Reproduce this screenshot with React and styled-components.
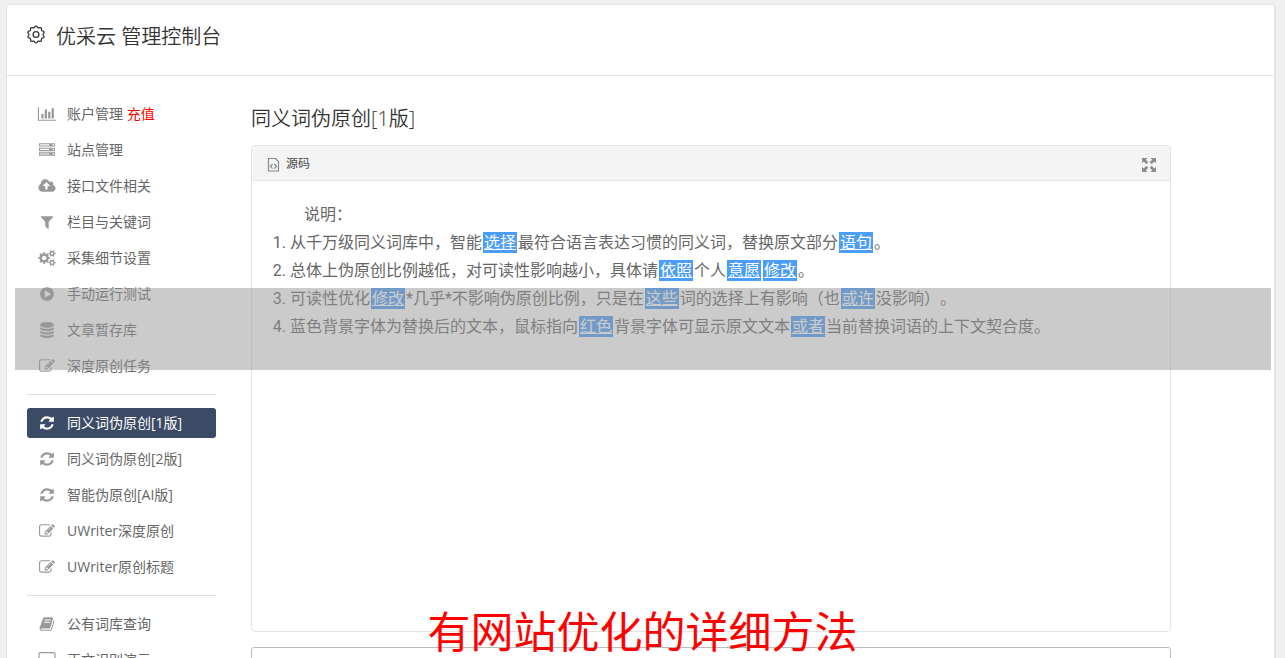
import React, { Component } from "react";
import styled, { createGlobalStyle } from "styled-components";

const GlobalStyle = createGlobalStyle`
  * {
    box-sizing: border-box;
  }
  body {
    margin: 0;
    height: 100vh;
    overflow: hidden;
    background-color: #f0f0f0;
    font-family: "Open Sans", "Noto Sans CJK SC", sans-serif;
    font-size: 14px;
    font-weight: 400;
    color: #666;
  }
`;

const Card = styled.div`
  margin: 4px 9px 0 6px;
  background-color: #fff;
  border: 1px solid #e4e4e4;
  border-right-width: 2px;
  border-radius: 4px;
`;

const Header = styled.header`
  height: 71px;
  display: flex;
  align-items: flex-start;
  gap: 10px;
  padding: 16px 19px;
  border-bottom: 1px solid #e4e4e4;
  color: #333;
`;

const Brand = styled.h1`
  margin: 0;
  font-size: 20px;
  line-height: 32px;
  font-weight: 350;
`;

const GearIcon = styled.svg`
  width: 20px;
  height: 28px;
`;

const Body = styled.div`
  display: flex;
  align-items: flex-start;
  gap: 35px;
  padding: 23px 20px;
`;

const Sidebar = styled.nav`
  flex: 0 0 189px;
`;

const Menu = styled.ul`
  list-style: none;
  display: flex;
  flex-direction: column;
  gap: 6px;
  margin: 0;
  padding: 0 0 13px;

  & + & {
    border-top: 1px solid #ddd;
    padding-top: 13px;
  }
`;

const MenuLink = styled.a`
  height: 30px;
  display: flex;
  align-items: center;
  gap: 10px;
  padding-left: 10px;
  border-radius: 3px;
  line-height: 30px;
  white-space: nowrap;
  text-decoration: none;
  color: ${(props) => (props.$active ? "#fff" : "#666")};
  background-color: ${(props) => (props.$active ? "#3b4b66" : "transparent")};

  svg {
    width: 20px;
    height: 16px;
    fill: ${(props) => (props.$active ? "#fff" : "#999")};
  }
`;

const Recharge = styled.span`
  color: #f00;
`;

const Main = styled.main`
  flex: 1;
  max-width: 920px;
`;

const Title = styled.h2`
  margin: 5px 0 11px;
  font-size: 20px;
  line-height: 30px;
  font-weight: 350;
  color: #333;
`;

const Editor = styled.section`
  height: 487px;
  border: 1px solid #e4e4e4;
  border-radius: 4px;
  overflow: hidden;
`;

const Toolbar = styled.div`
  height: 35px;
  display: flex;
  align-items: center;
  justify-content: space-between;
  padding: 1px 13px 0;
  border-bottom: 1px solid #e4e4e4;
  background-color: #f4f4f4;
`;

const ToolButton = styled.button`
  display: flex;
  align-items: center;
  gap: 5px;
  padding: 0;
  border: none;
  background-color: transparent;
  font-family: inherit;
  font-size: 12px;
  line-height: 18px;
  color: #484848;

  svg {
    width: 16px;
    height: 16px;
    margin-top: 3px;
  }
`;

const Content = styled.div`
  padding: 20px;
  font-family: Roboto, "Noto Sans CJK SC", sans-serif;
  font-size: 16px;
  line-height: 28px;
  text-spacing-trim: space-all;
`;

const Intro = styled.p`
  margin: 0;
  text-indent: 2em;
`;

const Rules = styled.ol`
  margin: 0;
  padding-left: 18px;
`;

const Replaced = styled.span`
  display: inline-block;
  height: 21px;
  margin: 0 1px;
  padding: 0 1px;
  line-height: 21px;
  background-color: #4a9df8;
  color: #fff;
  text-decoration: underline;
`;

const SourceText = styled.textarea`
  display: block;
  width: 100%;
  height: 120px;
  margin-top: 15px;
  border: 1px solid #bbb;
  border-radius: 3px;
  resize: none;
`;

const Shade = styled.div`
  position: absolute;
  top: 288px;
  left: 15px;
  right: 14px;
  height: 82px;
  background-color: rgba(151, 151, 151, 0.5);
`;

const Caption = styled.div`
  position: absolute;
  top: 606px;
  left: 0;
  right: 0;
  font-size: 43px;
  line-height: 52px;
  text-align: center;
  color: #f00;
`;

const icons = {
  chart: {
    box: "0 0 2048 1792",
    d: "M640 896v512h-256v-512h256zm384-512v1024h-256v-1024h256zm1024 1152v128h-2048v-1536h128v1408h1920zm-640-896v768h-256v-768h256zm384-384v1152h-256v-1152h256z"
  },
  server: {
    box: "0 0 1792 1792",
    d: "M128 1408h1024v-128h-1024v128zm0-512h1024v-128h-1024v128zm1568 448q0-40-28-68t-68-28-68 28-28 68 28 68 68 28 68-28 28-68zm-1568-960h1024v-128h-1024v128zm1568 448q0-40-28-68t-68-28-68 28-28 68 28 68 68 28 68-28 28-68zm0-512q0-40-28-68t-68-28-68 28-28 68 28 68 68 28 68-28 28-68zm96 832v384h-1792v-384h1792zm0-512v384h-1792v-384h1792zm0-512v384h-1792v-384h1792z"
  },
  upload: {
    box: "-64 0 1920 1792",
    d: "M1216 864q0-14-9-23l-352-352q-9-9-23-9t-23 9l-351 351q-10 12-10 24 0 14 9 23t23 9h224v352q0 13 9.5 22.5t22.5 9.5h192q13 0 22.5-9.5t9.5-22.5v-352h224q13 0 22.5-9.5t9.5-22.5zm640 288q0 159-112.5 271.5t-271.5 112.5h-1088q-185 0-316.5-131.5t-131.5-316.5q0-130 70-240t188-165q-2-30-2-43 0-212 150-362t362-150q156 0 285.5 87t188.5 231q71-62 166-62 106 0 181 75t75 181q0 76-41 138 130 31 213.5 135.5t83.5 238.5z"
  },
  filter: {
    box: "0 0 1792 1792",
    d: "M1595 295q17 41-14 70l-493 493v742q0 42-39 59-13 5-25 5-27 0-45-19l-256-256q-19-19-19-45v-486l-493-493q-31-29-14-70 17-39 59-39h1280q42 0 59 39z"
  },
  cogs: {
    box: "0 0 1920 1792",
    d: "M896 896q0-106-75-181t-181-75-181 75-75 181 75 181 181 75 181-75 75-181zm768 512q0-52-38-90t-90-38-90 38-38 90q0 53 37.5 90.5t90.5 37.5 90.5-37.5 37.5-90.5zm0-1024q0-52-38-90t-90-38-90 38-38 90q0 53 37.5 90.5t90.5 37.5 90.5-37.5 37.5-90.5zm-384 421v185q0 10-7 19.5t-16 10.5l-155 24q-11 35-32 76 34 48 90 115 7 11 7 20 0 12-7 19-23 30-82.5 89.5t-78.5 59.5q-11 0-21-7l-115-90q-37 19-77 31-11 108-23 155-7 24-30 24h-186q-11 0-20-7.5t-10-17.5l-23-153q-34-10-75-31l-118 89q-7 7-20 7-11 0-21-8-144-133-144-160 0-9 7-19 10-14 41-53t47-61q-23-44-35-82l-152-24q-10-1-17-9.5t-7-19.5v-185q0-10 7-19.5t16-10.5l155-24q11-35 32-76-34-48-90-115-7-11-7-20 0-12 7-20 22-30 82-89t79-59q11 0 21 7l115 90q34-18 77-32 11-108 23-154 7-24 30-24h186q11 0 20 7.5t10 17.5l23 153q34 10 75 31l118-89q8-7 20-7 11 0 21 8 144 133 144 160 0 8-7 19-12 16-42 54t-45 60q23 48 34 82l152 23q10 2 17 10.5t7 19.5zm640 533v140q0 16-149 31-12 27-30 52 51 113 51 138 0 4-4 7-122 71-124 71-8 0-46-47t-52-68q-20 2-30 2t-30-2q-14 21-52 68t-46 47q-2 0-124-71-4-3-4-7 0-25 51-138-18-25-30-52-149-15-149-31v-140q0-16 149-31 13-29 30-52-51-113-51-138 0-4 4-7 4-2 35-20t59-34 30-16q8 0 46 46.5t52 67.5q20-2 30-2t30 2q51-71 92-112l6-2q4 0 124 70 4 3 4 7 0 25-51 138 17 23 30 52 149 15 149 31zm0-1024v140q0 16-149 31-12 27-30 52 51 113 51 138 0 4-4 7-122 71-124 71-8 0-46-47t-52-68q-20 2-30 2t-30-2q-14 21-52 68t-46 47q-2 0-124-71-4-3-4-7 0-25 51-138-18-25-30-52-149-15-149-31v-140q0-16 149-31 13-29 30-52-51-113-51-138 0-4 4-7 4-2 35-20t59-34 30-16q8 0 46 46.5t52 67.5q20-2 30-2t30 2q51-71 92-112l6-2q4 0 124 70 4 3 4 7 0 25-51 138 17 23 30 52 149 15 149 31z"
  },
  play: {
    box: "0 0 1792 1792",
    d: "M896 128q209 0 385.5 103t279.5 279.5 103 385.5-103 385.5-279.5 279.5-385.5 103-385.5-103-279.5-279.5-103-385.5 103-385.5 279.5-279.5 385.5-103zm384 823q32-18 32-55t-32-55l-544-320q-31-19-64-1-32 19-32 56v640q0 37 32 56 16 8 32 8 17 0 32-9z"
  },
  database: {
    box: "0 0 1792 1792",
    d: "M896 768q237 0 443-43t325-127v170q0 69-103 128t-280 93.5-385 34.5-385-34.5-280-93.5-103-128v-170q119 84 325 127t443 43zm0 768q237 0 443-43t325-127v170q0 69-103 128t-280 93.5-385 34.5-385-34.5-280-93.5-103-128v-170q119 84 325 127t443 43zm0-384q237 0 443-43t325-127v170q0 69-103 128t-280 93.5-385 34.5-385-34.5-280-93.5-103-128v-170q119 84 325 127t443 43zm0-1152q208 0 385 34.5t280 93.5 103 128v128q0 69-103 128t-280 93.5-385 34.5-385-34.5-280-93.5-103-128v-128q0-69 103-128t280-93.5 385-34.5z"
  },
  edit: {
    box: "0 0 1792 1792",
    d: "M888 1184l116-116-152-152-116 116v56h96v96h56zm440-720q-16-16-33 1l-350 350q-17 17-1 33t33-1l350-350q17-17 1-33zm80 594v190q0 119-84.5 203.5t-203.5 84.5h-832q-119 0-203.5-84.5t-84.5-203.5v-832q0-119 84.5-203.5t203.5-84.5h832q63 0 117 25 15 7 18 23 3 17-9 29l-49 49q-14 14-32 8-23-6-45-6h-832q-66 0-113 47t-47 113v832q0 66 47 113t113 47h832q66 0 113-47t47-113v-126q0-13 9-22l64-64q15-15 35-7t20 29zm-96-738l288 288-672 672h-288v-288zm444 132l-92 92-288-288 92-92q28-28 68-28t68 28l152 152q28 28 28 68t-28 68z"
  },
  refresh: {
    box: "0 0 1792 1792",
    d: "M1639 1056q0 5-1 7-64 268-268 434.5t-478 166.5q-146 0-282.5-55t-243.5-157l-129 129q-19 19-45 19t-45-19-19-45v-448q0-26 19-45t45-19h448q26 0 45 19t19 45-19 45l-137 137q71 66 161 102t187 36q134 0 250-65t186-179q11-17 53-117 8-23 30-23h192q13 0 22.5 9.5t9.5 22.5zm25-800v448q0 26-19 45t-45 19h-448q-26 0-45-19t-19-45 19-45l138-138q-148-137-349-137-134 0-250 65t-186 179q-11 17-53 117-8 23-30 23h-199q-13 0-22.5-9.5t-9.5-22.5v-7q65-268 270-434.5t480-166.5q146 0 284 55.5t245 156.5l130-129q19-19 45-19t45 19 19 45z"
  },
  book: {
    box: "0 0 1792 1792",
    d: "M1703 478q40 57 18 129l-275 906q-19 64-76.5 107.5t-122.5 43.5h-923q-77 0-148.5-53.5t-99.5-131.5q-24-67-2-127 0-4 3-27t4-37q1-8-3-21.5t-3-19.5q2-11 8-21t16.5-23.5 16.5-23.5q23-38 45-91.5t30-91.5q3-10 .5-30t-.5-28q3-11 17-28t17-23q21-36 42-92t25-90q1-9-2.5-32t.5-28q4-13 22-30.5t22-22.5q19-26 42.5-84.5t27.5-96.5q1-8-3-25.5t-2-26.5q2-8 9-18t18-23 17-21q8-12 16.5-30.5t15-35 16-36 19.5-32 26.5-23.5 36-11.5 47.5 5.5l-1 3q38-9 51-9h761q74 0 114 56t18 130l-274 906q-36 119-71.5 153.5t-128.5 34.5h-869q-27 0-38 15-11 16-1 43 24 70 144 70h923q29 0 56-15.5t35-41.5l300-987q7-22 5-57 38 15 59 43zm-1064 2q-4 13 2 22.5t20 9.5h608q13 0 25.5-9.5t16.5-22.5l21-64q4-13-2-22.5t-20-9.5h-608q-13 0-25.5 9.5t-16.5 22.5zm-83 256q-4 13 2 22.5t20 9.5h608q13 0 25.5-9.5t16.5-22.5l21-64q4-13-2-22.5t-20-9.5h-608q-13 0-25.5 9.5t-16.5 22.5z"
  },
  desktop: {
    box: "0 0 1920 1792",
    d: "M1792 992v-832q0-13-9.5-22.5t-22.5-9.5h-1600q-13 0-22.5 9.5t-9.5 22.5v832q0 13 9.5 22.5t22.5 9.5h1600q13 0 22.5-9.5t9.5-22.5zm128-832v1088q0 66-47 113t-113 47h-544q0 37 16 77.5t32 71 16 43.5q0 26-19 45t-45 19h-512q-26 0-45-19t-19-45q0-14 16-44t32-70 16-78h-544q-66 0-113-47t-47-113v-1088q0-66 47-113t113-47h1600q66 0 113 47t47 113z"
  }
};

// scalloped outline of the header gear, ten lobes
const gearPoints = Array.from({ length: 120 }, (_, i) => {
  const angle = (i / 120) * Math.PI * 2;
  const radius = 7.7 + 0.7 * Math.cos(angle * 10);
  const x = 10 + radius * Math.sin(angle);
  const y = 13.5 - radius * Math.cos(angle);
  return `${x.toFixed(2)},${y.toFixed(2)}`;
}).join(" ");

const Icon = ({ name }) => (
  <svg viewBox={icons[name].box} aria-hidden="true">
    <path d={icons[name].d} />
  </svg>
);

class App extends Component {
  state = {
    active: "同义词伪原创[1版]",
    source: "",
    menus: [
      [
        { icon: "chart", label: "账户管理", extra: "充值" },
        { icon: "server", label: "站点管理" },
        { icon: "upload", label: "接口文件相关" },
        { icon: "filter", label: "栏目与关键词" },
        { icon: "cogs", label: "采集细节设置" },
        { icon: "play", label: "手动运行测试" },
        { icon: "database", label: "文章暂存库" },
        { icon: "edit", label: "深度原创任务" }
      ],
      [
        { icon: "refresh", label: "同义词伪原创[1版]" },
        { icon: "refresh", label: "同义词伪原创[2版]" },
        { icon: "refresh", label: "智能伪原创[AI版]" },
        { icon: "edit", label: "UWriter深度原创" },
        { icon: "edit", label: "UWriter原创标题" }
      ],
      [
        { icon: "book", label: "公有词库查询" },
        { icon: "desktop", label: "正文识别演示" }
      ]
    ]
  };

  select = (event, label) => {
    event.preventDefault();
    this.setState({ active: label });
  };

  render() {
    return (
      <>
        <GlobalStyle />
        <Card>
          <Header>
            <GearIcon viewBox="0 0 20 28" fill="none" stroke="#333" aria-hidden="true">
              <polygon points={gearPoints} strokeWidth="1.3" />
              <circle cx="10" cy="13.5" r="2.9" strokeWidth="1.3" />
            </GearIcon>
            <Brand>优采云 管理控制台</Brand>
          </Header>
          <Body>
            <Sidebar>
              {this.state.menus.map((items, index) => (
                <Menu key={index}>
                  {items.map((item) => (
                    <li key={item.label}>
                      <MenuLink
                        href="#"
                        $active={item.label === this.state.active}
                        onClick={(event) => this.select(event, item.label)}
                      >
                        <Icon name={item.icon} />
                        <span>
                          {item.label}
                          {item.extra && <Recharge> {item.extra}</Recharge>}
                        </span>
                      </MenuLink>
                    </li>
                  ))}
                </Menu>
              ))}
            </Sidebar>
            <Main>
              <Title>同义词伪原创[1版]</Title>
              <Editor>
                <Toolbar>
                  <ToolButton type="button">
                    <svg viewBox="0 0 16 16" fill="none" stroke="#888" aria-hidden="true">
                      <path d="M3.500 1.500h7l3 3v9.500h-10z" strokeWidth="1.200" />
                      <path d="M7.500 7l-2 2.300 2 2.300M9.500 7l2 2.300-2 2.300" strokeWidth="1.200" />
                    </svg>
                    源码
                  </ToolButton>
                  <ToolButton type="button" aria-label="最大化">
                    <svg viewBox="0 0 16 16" fill="#8c8c8c" aria-hidden="true">
                      <path d="M1 1h5.500l-1.700 1.700 2.500 2.500-2 2-2.600-2.600L1 6.300zM15 1v5.300l-1.700-1.700-2.600 2.600-2-2 2.500-2.500L9.500 1zM1 15V9.700l1.700 1.700 2.600-2.600 2 2-2.500 2.500L6.500 15zM15 15H9.500l1.700-1.700-2.500-2.500 2-2 2.600 2.600L15 9.700z" />
                    </svg>
                  </ToolButton>
                </Toolbar>
                <Content>
                  <Intro>说明：</Intro>
                  <Rules>
                    <li>
                      从千万级同义词库中，智能<Replaced>选择</Replaced>
                      最符合语言表达习惯的同义词，替换原文部分<Replaced>语句</Replaced>。
                    </li>
                    <li>
                      总体上伪原创比例越低，对可读性影响越小，具体请<Replaced>依照</Replaced>
                      个人<Replaced>意愿</Replaced>
                      <Replaced>修改</Replaced>。
                    </li>
                    <li>
                      可读性优化<Replaced>修改</Replaced>
                      *几乎*不影响伪原创比例，只是在<Replaced>这些</Replaced>
                      词的选择上有影响（也<Replaced>或许</Replaced>没影响）。
                    </li>
                    <li>
                      蓝色背景字体为替换后的文本，鼠标指向<Replaced>红色</Replaced>
                      背景字体可显示原文文本<Replaced>或者</Replaced>
                      当前替换词语的上下文契合度。
                    </li>
                  </Rules>
                </Content>
              </Editor>
              <SourceText
                aria-label="原文"
                value={this.state.source}
                onChange={(event) => this.setState({ source: event.target.value })}
              />
            </Main>
          </Body>
        </Card>
        <Shade />
        <Caption>有网站优化的详细方法</Caption>
      </>
    );
  }
}
export default App;
